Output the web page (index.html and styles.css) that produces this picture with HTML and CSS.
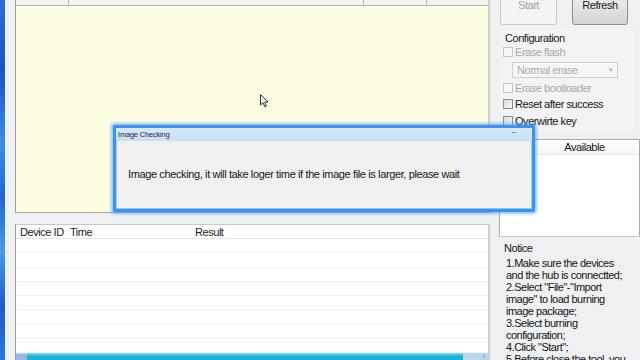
FILE: index.html
```html
<!DOCTYPE html>
<html>
<head>
<meta charset="utf-8">
<link rel="stylesheet" href="styles.css">
</head>
<body>
<div class="screen">
  <div class="frame-edge"></div>
  <div class="app">
    <div class="main">
      <div class="panel-top">
        <div class="grid-head">
          <span class="gh gh1"></span><span class="gh gh2"></span><span class="gh gh3"></span><span class="gh gh4"></span>
        </div>
        <div class="grid-body"></div>
      </div>
      <div class="panel-bottom">
        <div class="list-head">
          <span class="lh lh1">Device ID</span><span class="lh lh2">Time</span><span class="lh lh3">Result</span>
        </div>
        <div class="rows">
          <div class="row"></div><div class="row"></div><div class="row"></div><div class="row"></div>
          <div class="row"></div><div class="row"></div><div class="row"></div><div class="row"></div>
        </div>
        <div class="hscroll">
          <span class="hs-left"></span><span class="hs-track"></span><span class="hs-right">›</span>
        </div>
      </div>
    </div>
    <div class="side">
      <div class="buttons">
        <div class="btn btn-disabled">Start</div>
        <div class="btn btn-normal">Refresh</div>
      </div>
      <div class="config">
        <div class="group-title">Configuration</div>
        <div class="check disabled r1"><span class="box"></span><span>Erase flash</span></div>
        <div class="select">Normal erase<span class="caret">▾</span></div>
        <div class="check disabled r3"><span class="box"></span><span>Erase bootloader</span></div>
        <div class="check r4"><span class="box"></span><span>Reset after success</span></div>
        <div class="check r5"><span class="box"></span><span>Overwirte key</span></div>
      </div>
      <div class="avail">
        <div class="avail-head"><span class="ah1"></span><span class="ah2">Available</span></div>
      </div>
      <div class="notice-title">Notice</div>
      <div class="notice-text">1.Make sure the devices<br>and the hub is connectted;<br>2.Select "File"-"Import<br>image" to load burning<br>image package;<br>3.Select burning<br>configuration;<br>4.Click "Start";<br>5.Before close the tool, you</div>
    </div>
  </div>

  <div class="dialog">
    <div class="dlg-title"><span>Image Checking</span><span class="dlg-min">–</span></div>
    <div class="dlg-body">Image checking, it will take loger time if the image file is larger, please wait</div>
  </div>

  <svg class="cursor" width="10" height="14" viewBox="0 0 10 14">
    <path d="M0.5 0.5 L0.5 11 L3 8.6 L4.8 12.8 L6.4 12.1 L4.7 8 L8 8 Z" fill="#fff" stroke="#333" stroke-width="1"/>
  </svg>
</div>
</body>
</html>
```

FILE: styles.css
```css
html, body {
  margin: 0;
  padding: 0;
}
body {
  width: 640px;
  height: 360px;
  overflow: hidden;
  background: #f0f0f0;
  font-family: "Liberation Sans", Arial, sans-serif;
  font-size: 11px;
  letter-spacing: -0.45px;
  color: #151515;
}
.screen {
  position: relative;
  width: 640px;
  height: 360px;
  display: flex;
  overflow: hidden;
}
.frame-edge {
  width: 5px;
  flex: none;
  background: linear-gradient(180deg, #2a6fd6 0%, #1b55c0 20%, #3e8fe6 40%, #2266cc 55%, #4a9ae8 70%, #1d5ec8 85%, #2f78da 100%);
}
.app {
  flex: 1;
  display: flex;
  padding-left: 10px;
  background: #eff0f2;
}
.main {
  width: 475px;
  flex: none;
  display: flex;
  flex-direction: column;
  gap: 11px;
}
.panel-top {
  height: 213px;
  flex: none;
  box-sizing: border-box;
  border-left: 1px solid #9c9c9c;
  border-right: 2px solid #cfcfcf;
  border-bottom: 1px solid #a8a8a8;
  background: #fdfde2;
  display: flex;
  flex-direction: column;
}
.grid-head {
  height: 5px;
  flex: none;
  display: flex;
  background: #f3f3f3;
  border-bottom: 1px solid #b4b4b4;
}
.gh {
  border-right: 1px solid #b8b8b8;
}
.gh1 { width: 52px; }
.gh2 { width: 294px; }
.gh3 { width: 62px; }
.gh4 { flex: 1; border-right: none; }
.grid-body {
  flex: 1;
}
.panel-bottom {
  flex: 1;
  box-sizing: border-box;
  border-left: 1px solid #9c9c9c;
  border-top: 1px solid #c8c8c8;
  border-right: 2px solid #cfcfcf;
  background: #fff;
  display: flex;
  flex-direction: column;
  overflow: hidden;
}
.list-head {
  height: 13px;
  flex: none;
  display: flex;
  align-items: center;
  border-bottom: 1px solid #e6e6e6;
  color: #1a1a1a;
  white-space: nowrap;
}
.lh1 { width: 50px; padding-left: 4px; box-sizing: border-box; flex: none; }
.lh2 { width: 125px; padding-left: 4px; box-sizing: border-box; flex: none; }
.lh3 { padding-left: 4px; }
.rows {
  flex: none;
}
.row {
  height: 13.25px;
  border-bottom: 1px solid #f2f2f4;
}
.hscroll {
  flex: none;
  height: 17px;
  display: flex;
}
.hs-left {
  width: 11px;
  background: #9ab9ea;
  border-top: 1px solid #c4d6f2;
}
.hs-track {
  flex: 1;
  background: linear-gradient(180deg, #8ee0f4 0px, #1cb4de 3px, #18a8d6 100%);
}
.hs-right {
  width: 25px;
  background: #bcd5ee;
  color: #5a7aa0;
  font-size: 8px;
  line-height: 8px;
  text-align: right;
  padding-right: 3px;
  box-sizing: border-box;
}
.side {
  width: 143px;
  flex: none;
  margin-left: 7px;
  display: flex;
  flex-direction: column;
}
.side > * {
  flex: none;
}
.buttons {
  display: flex;
  gap: 15px;
  margin-top: -15px;
  padding-left: 3px;
}
.btn {
  height: 40px;
  box-sizing: border-box;
  border-radius: 3px;
  display: flex;
  align-items: center;
  justify-content: center;
  font-size: 11px;
}
.btn-disabled {
  width: 57px;
  background: #f4f4f4;
  border: 1px solid #c9c9c9;
  color: #a2a2a2;
}
.btn-normal {
  width: 56px;
  background: linear-gradient(180deg, #f3f3f3 0%, #e6e6e6 50%, #d2d2d2 100%);
  border: 1px solid #8f8f8f;
  color: #1a1a1a;
}
.config {
  margin: 4px 5px 0 3px;
  padding: 2px 0 3px 5px;
  background: #f3f3f4;
  display: flex;
  flex-direction: column;
}
.group-title {
  height: 14px;
  line-height: 14px;
}
.check {
  height: 14px;
  display: flex;
  align-items: center;
  gap: 2px;
}
.check .box {
  width: 8px;
  height: 8px;
  border: 1px solid #8c8c8c;
  background: linear-gradient(135deg, #dcdcdc, #f6f6f6);
  margin-left: -2px;
}
.check.disabled {
  color: #a7a7a7;
}
.check.disabled .box {
  border-color: #c4c4c4;
  background: #f6f6f6;
}
.r1 { margin-top: 0; }
.r3 { margin-top: 3px; }
.r4 { margin-top: 2px; }
.r5 { margin-top: 3px; }
.select {
  margin-top: 3px;
  margin-left: 7px;
  width: 106px;
  height: 16px;
  box-sizing: border-box;
  border: 1px solid #cfcfcf;
  background: #f6f6f6;
  color: #a9a9a9;
  padding-left: 4px;
  display: flex;
  align-items: center;
  justify-content: space-between;
}
.caret {
  font-size: 7px;
  color: #b0b0b0;
  padding-right: 4px;
}
.avail {
  margin-top: 8px;
  margin-left: 2px;
  height: 98px;
  box-sizing: border-box;
  border: 1px solid #a9a9a9;
  border-bottom-color: #c8c8c8;
  background: #fff;
}
.avail-head {
  height: 14px;
  display: flex;
  align-items: center;
  border-bottom: 1px solid #e8e8e8;
  background: linear-gradient(180deg, #ffffff, #f4f4f4);
}
.ah1 { width: 34px; }
.ah2 { flex: 1; text-align: center; padding-right: 4px; }
.notice-title {
  margin-top: 4px;
  padding-left: 7px;
  height: 14px;
  line-height: 14px;
}
.notice-text {
  margin-top: 2px;
  padding-left: 9px;
  line-height: 12px;
  white-space: nowrap;
  letter-spacing: -0.5px;
}
.dialog {
  position: absolute;
  left: 113px;
  top: 125px;
  width: 422px;
  height: 87px;
  box-sizing: border-box;
  border: 3px solid #3c93ef;
  border-radius: 2px;
  box-shadow: 0 0 3px 2px rgba(60, 150, 240, 0.55), inset 0 0 0 1px #8cc4f6;
  background: #f0f0f0;
  display: flex;
  flex-direction: column;
}
.dlg-title {
  height: 13px;
  flex: none;
  background: linear-gradient(180deg, #d9e9f6, #c9dff0);
  display: flex;
  align-items: center;
  justify-content: space-between;
  padding: 0 16px 0 2px;
  font-size: 7.5px;
  letter-spacing: -0.2px;
  color: #1c2b4a;
}
.dlg-min {
  font-size: 8px;
  color: #3a4a6a;
  margin-top: -6px;
}
.dlg-body {
  flex: 1;
  padding: 26px 0 0 11px;
  font-size: 11px;
  letter-spacing: -0.38px;
  line-height: 14px;
  border-left: 1px solid #a9cdf2;
  border-right: 1px solid #a9cdf2;
}
.cursor {
  position: absolute;
  left: 260px;
  top: 94px;
}
```
